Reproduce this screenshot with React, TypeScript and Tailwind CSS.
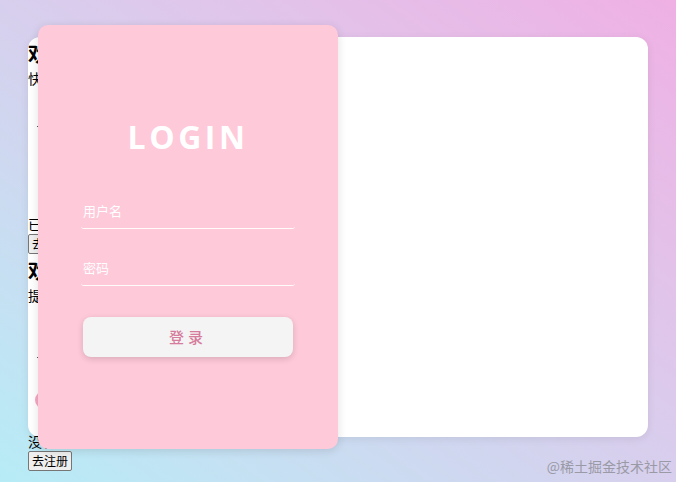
import React from 'react';

const cjk = { fontFamily: '"Noto Sans CJK SC", "Noto Sans", sans-serif' };

function NativeButton({ children }: { children: React.ReactNode }) {
  return (
    <button className="h-[20px] rounded-[2px] border border-[#767676] bg-[#efefef] px-[3px] text-[12px] leading-[16px] text-black">
      {children}
    </button>
  );
}

function IntroBlock({ title, sub, action, btn, second }: { title: string; sub: string; action: string; btn: string; second?: boolean }) {
  return (
    <div className="flex flex-col items-start text-black">
      <h2 className="h-[31px] text-[21px] font-bold leading-[31px]">{title}</h2>
      <p className="h-[20px] text-[14px] leading-[20px]">{sub}</p>
      <div className="relative h-[126px] w-[200px]">
        {/* broken image remains */}
        <span className={`absolute left-[9px] h-[1px] w-[2px] bg-[#555] ${second ? 'top-[52px]' : 'top-[38px]'}`} />
        {second && <span className="absolute left-[7px] top-[86px] h-[18px] w-[20px] rounded-full bg-[#f7a8c4]" />}
      </div>
      <p className="h-[20px] text-[14px] leading-[20px]">{action}</p>
      <NativeButton>{btn}</NativeButton>
    </div>
  );
}

export default function App() {
  return (
    <div
      className="relative h-[482px] w-full overflow-hidden bg-gradient-to-tr from-[#b6ecf6] to-[#efb0e4] pl-[28px] pt-[37px]"
      style={cjk}
    >
      <div className="h-[400px] w-[620px] rounded-[12px] bg-white shadow-[0_2px_8px_rgba(0,0,0,0.08)]">
        <IntroBlock title="欢迎来到小站" sub="快来注册账号吧" action="已有账号？" btn="去登录" />
        <IntroBlock title="欢迎回来" sub="提示：请登录" action="没有账号？" btn="去注册" second />
      </div>

      <div className="absolute left-[38px] top-[25px] flex h-[424px] w-[300px] flex-col items-center rounded-[10px] bg-[#fec9d9] pt-[92px] shadow-[0_2px_10px_rgba(0,0,0,0.12)]">
        <h1
          className="h-[40px] text-[32px] font-bold leading-[40px] tracking-[3.5px] text-white"
          style={{ fontFamily: '"Open Sans", "Noto Sans", sans-serif' }}
        >
          LOGIN
        </h1>
        <div className="mt-[36px] h-[36px] w-[214px] rounded-b-[3px] border-b border-white/90 pl-[2px] pt-[8px] text-[13px] leading-[20px] text-white">
          用户名
        </div>
        <div className="mt-[21px] h-[36px] w-[214px] rounded-b-[3px] border-b border-white/90 pl-[2px] pt-[8px] text-[13px] leading-[20px] text-white">
          密码
        </div>
        <button className="mt-[31px] h-[40px] w-[210px] rounded-[8px] bg-[#f5f4f4] text-[15px] font-medium tracking-[4px] text-[#d67c9c] shadow-[0_2px_6px_rgba(0,0,0,0.15)]">
          登录
        </button>
      </div>

      <div className="absolute bottom-[5px] right-[4px] text-[14px] text-[#9a9aa6]">@稀土掘金技术社区</div>
    </div>
  );
}
